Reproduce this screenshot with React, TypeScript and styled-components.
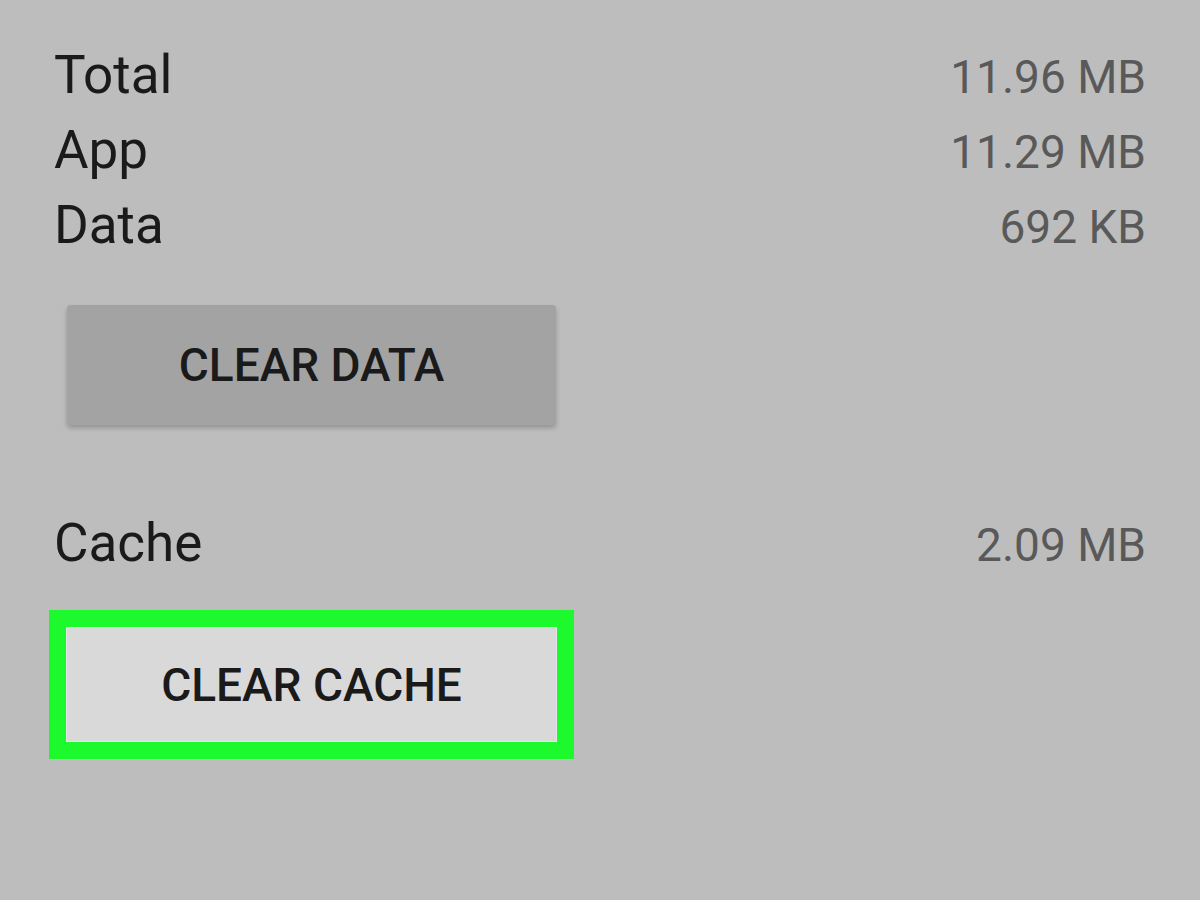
import React from "react";
import styled, { createGlobalStyle } from "styled-components";

const Global = createGlobalStyle`
  html, body {
    margin: 0;
    padding: 0;
    background: #bdbdbd;
  }
  body {
    font-family: Roboto, "Noto Sans", "Liberation Sans", sans-serif;
  }
`;

const Screen = styled.div`
  width: 1200px;
  height: 900px;
  box-sizing: border-box;
  background: #bdbdbd;
  padding: 38px 54px 0 54px;
  display: flex;
  flex-direction: column;
  overflow: hidden;
`;

const Row = styled.div<{ $top?: number }>`
  display: flex;
  justify-content: space-between;
  align-items: baseline;
  height: 75px;
  margin-top: ${(p) => p.$top ?? 0}px;
`;

const Label = styled.span`
  font-size: 53px;
  line-height: 75px;
  color: #1a1a1a;
  font-weight: 400;
`;

const Value = styled.span`
  font-size: 46px;
  line-height: 1;
  color: #595959;
  font-weight: 400;
`;

const RaisedButton = styled.button`
  margin: 42px 0 0 13px;
  width: 489px;
  height: 120px;
  border: none;
  border-radius: 4px;
  background: #a3a3a3;
  box-shadow: 0 3px 5px rgba(0, 0, 0, 0.22);
  font-family: inherit;
  font-size: 46px;
  font-weight: 500;
  color: #1a1a1a;
  padding: 0;
  display: flex;
  align-items: center;
  justify-content: center;
`;

const Highlight = styled.div`
  margin: 29px 0 0 -5px;
  width: 525px;
  height: 149px;
  box-sizing: border-box;
  border: 17px solid #1cf92d;
  display: flex;
`;

const FlatButton = styled.button`
  flex: 1;
  border: none;
  background: #d9d9d9;
  box-shadow: inset 0 0 0 1px #e4e4e4;
  font-family: inherit;
  font-size: 46px;
  font-weight: 500;
  color: #1a1a1a;
  padding: 0;
  display: flex;
  align-items: center;
  justify-content: center;
`;

const rows = [
  { label: "Total", value: "11.96 MB" },
  { label: "App", value: "11.29 MB" },
  { label: "Data", value: "692 KB" },
];

export default function App() {
  return (
    <>
      <Global />
      <Screen>
        {rows.map((r) => (
          <Row key={r.label}>
            <Label>{r.label}</Label>
            <Value>{r.value}</Value>
          </Row>
        ))}
        <RaisedButton>CLEAR DATA</RaisedButton>
        <Row $top={81}>
          <Label>Cache</Label>
          <Value>2.09 MB</Value>
        </Row>
        <Highlight>
          <FlatButton>CLEAR CACHE</FlatButton>
        </Highlight>
      </Screen>
    </>
  );
}
